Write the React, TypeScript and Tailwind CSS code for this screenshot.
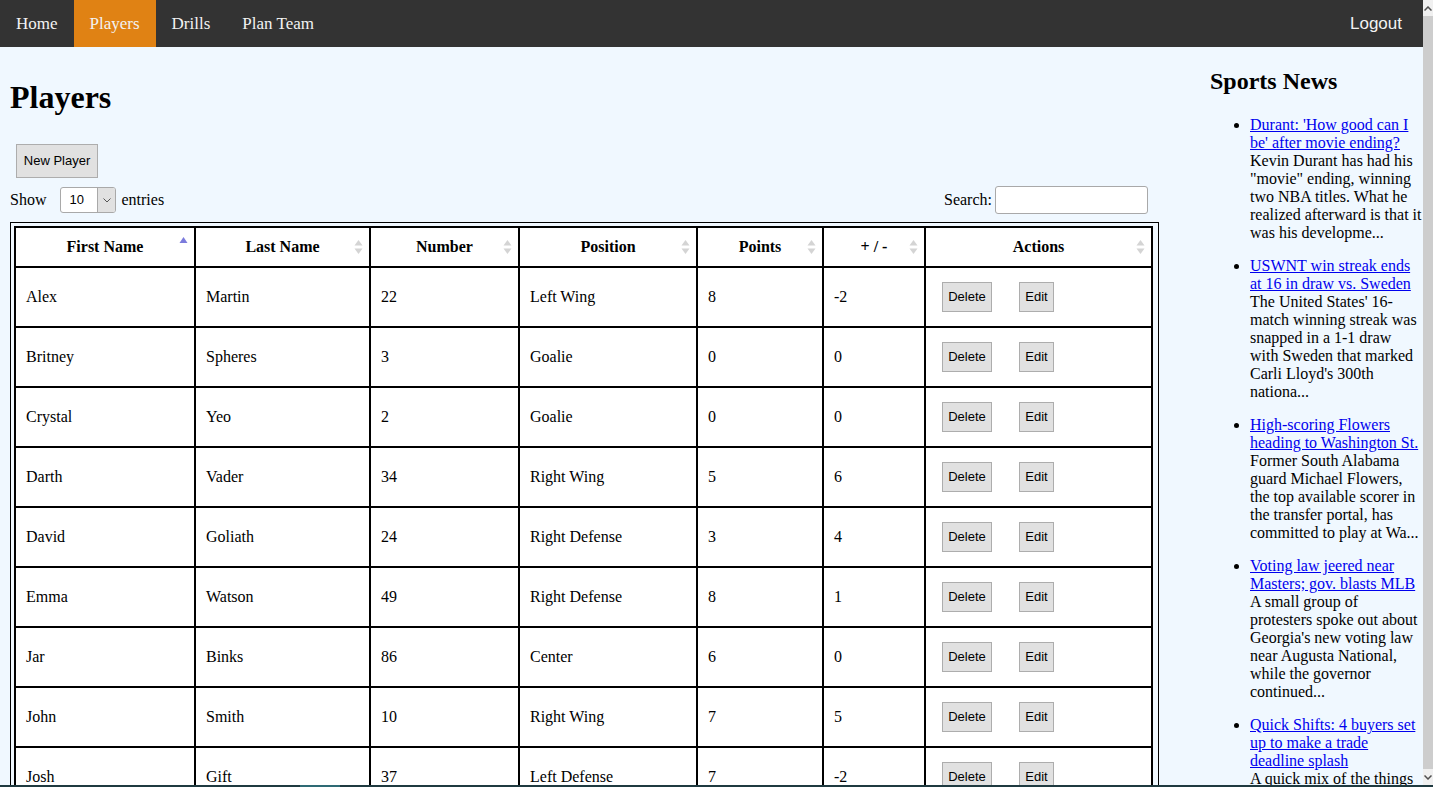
const players = [
  ["Alex", "Martin", "22", "Left Wing", "8", "-2"],
  ["Britney", "Spheres", "3", "Goalie", "0", "0"],
  ["Crystal", "Yeo", "2", "Goalie", "0", "0"],
  ["Darth", "Vader", "34", "Right Wing", "5", "6"],
  ["David", "Goliath", "24", "Right Defense", "3", "4"],
  ["Emma", "Watson", "49", "Right Defense", "8", "1"],
  ["Jar", "Binks", "86", "Center", "6", "0"],
  ["John", "Smith", "10", "Right Wing", "7", "5"],
  ["Josh", "Gift", "37", "Left Defense", "7", "-2"],
  ["Luke", "Skywalker", "11", "Center", "9", "3"],
];

const columns = [
  { label: "First Name", width: "w-[180px]" },
  { label: "Last Name", width: "w-[175px]" },
  { label: "Number", width: "w-[149px]" },
  { label: "Position", width: "w-[178px]" },
  { label: "Points", width: "w-[126px]" },
  { label: "+ / -", width: "w-[102px]" },
  { label: "Actions", width: "w-[227px]" },
];

const news = [
  {
    title: "Durant: 'How good can I be' after movie ending?",
    text: 'Kevin Durant has had his "movie" ending, winning two NBA titles. What he realized afterward is that it was his developme...',
  },
  {
    title: "USWNT win streak ends at 16 in draw vs. Sweden",
    text: "The United States' 16-match winning streak was snapped in a 1-1 draw with Sweden that marked Carli Lloyd's 300th nationa...",
  },
  {
    title: "High-scoring Flowers heading to Washington St.",
    text: "Former South Alabama guard Michael Flowers, the top available scorer in the transfer portal, has committed to play at Wa...",
  },
  {
    title: "Voting law jeered near Masters; gov. blasts MLB",
    text: "A small group of protesters spoke out about Georgia's new voting law near Augusta National, while the governor continued...",
  },
  {
    title: "Quick Shifts: 4 buyers set up to make a trade deadline splash",
    text: "A quick mix of the things we noticed around the league this week...",
  },
];

function SortIcon({ active }: { active: boolean }) {
  if (active) {
    return (
      <svg width="9" height="16" viewBox="0 0 9 16" className="absolute right-[6px] top-[8px]">
        <path d="M4.5 1 L8.5 7 L0.5 7 Z" fill="#7b7bdc" />
      </svg>
    );
  }
  return (
    <svg width="9" height="16" viewBox="0 0 9 16" className="absolute right-[6px] top-[11px]">
      <path d="M4.5 1 L8.5 6.5 L0.5 6.5 Z" fill="#d4d4d4" />
      <path d="M4.5 15 L8.5 9.5 L0.5 9.5 Z" fill="#d4d4d4" />
    </svg>
  );
}

function Btn({ children, className }: { children: string; className: string }) {
  return (
    <button
      className={`border border-[#adadad] bg-[#e1e1e1] text-[13px] text-black font-['Liberation_Sans',Arial,sans-serif] ${className}`}
    >
      {children}
    </button>
  );
}

export default function App() {
  return (
    <div className="flex h-[787px] flex-col overflow-hidden bg-[#f0f8ff] font-['Liberation_Serif','Times_New_Roman',serif] text-[16px] text-black">
      <div className="flex min-h-0 flex-1">
        <div className="flex min-w-0 flex-1 flex-col overflow-hidden">
          <nav className="flex h-[47px] shrink-0 items-stretch bg-[#333333] text-[17px] text-[#f2f2f2]">
            {["Home", "Players", "Drills", "Plan Team"].map((item) => (
              <a
                key={item}
                className={`flex items-center px-[16px] ${item === "Players" ? "bg-[#e08214]" : ""}`}
              >
                {item}
              </a>
            ))}
            <a className="ml-auto flex items-center pr-[21px] font-['Liberation_Sans',Arial,sans-serif]">
              Logout
            </a>
          </nav>

          <div className="flex min-h-0 flex-1">
            <main className="w-[1200px] shrink-0 px-[10px] pt-[10px]">
              <h1 className="mt-[22px] mb-[28px] text-[32px] font-bold leading-[37px]">Players</h1>
              <Btn className="ml-[6px] h-[34px] w-[82px]">New Player</Btn>

              <div className="mt-[8px] flex w-[1138px] items-center justify-between">
                <div className="flex items-center">
                  <span>Show</span>
                  <div className="ml-[14px] flex h-[26px] w-[56px] items-stretch overflow-hidden rounded-[3px] border border-[#a9a9a9] bg-white">
                    <span className="flex flex-1 items-center pl-[8px] text-[13px] font-['Liberation_Sans',Arial,sans-serif]">
                      10
                    </span>
                    <span className="flex w-[18px] items-center justify-center border-l border-[#a9a9a9] bg-[#e1e1e1]">
                      <svg width="8" height="5" viewBox="0 0 8 5">
                        <path d="M0.5 0.5 L4 4 L7.5 0.5" fill="none" stroke="#555" strokeWidth="1" />
                      </svg>
                    </span>
                  </div>
                  <span className="ml-[5px]">entries</span>
                </div>
                <div className="flex items-center">
                  <span className="mr-[3px]">Search:</span>
                  <input className="h-[28px] w-[153px] rounded-[3px] border border-[#a9a9a9] bg-white" />
                </div>
              </div>

              <div className="mt-[8px] w-[1149px] border border-black p-[3px]">
                <table className="w-[1139px] table-fixed border-collapse bg-white">
                  <thead>
                    <tr className="h-[40px]">
                      {columns.map((c, i) => (
                        <th key={c.label} className={`relative border-2 border-black font-bold ${c.width}`}>
                          {c.label}
                          <SortIcon active={i === 0} />
                        </th>
                      ))}
                    </tr>
                  </thead>
                  <tbody>
                    {players.map((p) => (
                      <tr key={p[0]} className="h-[60px]">
                        {p.map((v, i) => (
                          <td key={i} className="border-2 border-black pl-[10px]">
                            {v}
                          </td>
                        ))}
                        <td className="border-2 border-black pl-[16px]">
                          <div className="flex items-center">
                            <Btn className="h-[30px] w-[50px]">Delete</Btn>
                            <Btn className="ml-[27px] h-[30px] w-[35px]">Edit</Btn>
                          </div>
                        </td>
                      </tr>
                    ))}
                  </tbody>
                </table>
              </div>
            </main>

            <aside className="min-w-0 flex-1 pl-[10px]">
              <h2 className="mt-[20px] mb-[21px] text-[24px] font-bold leading-[28px]">Sports News</h2>
              <ul className="list-disc pl-[40px] leading-[18px]">
                {news.map((n) => (
                  <li key={n.title} className="mb-[15px]">
                    <a className="text-[#0000ee] underline">{n.title}</a>
                    <div>{n.text}</div>
                  </li>
                ))}
              </ul>
            </aside>
          </div>
        </div>

        <div className="flex w-[10px] shrink-0 flex-col bg-[#f0f0f0]">
          <div className="flex h-[16px] items-center justify-center">
            <svg width="8" height="5" viewBox="0 0 8 5">
              <path d="M0.5 4.5 L4 1 L7.5 4.5" fill="none" stroke="#505050" strokeWidth="1.5" />
            </svg>
          </div>
          <div className="flex-1 bg-[#cdcdcd]" />
          <div className="flex h-[16px] items-center justify-center">
            <svg width="8" height="5" viewBox="0 0 8 5">
              <path d="M0.5 0.5 L4 4 L7.5 0.5" fill="none" stroke="#505050" strokeWidth="1.5" />
            </svg>
          </div>
        </div>
      </div>
      <div className="flex h-[2px] shrink-0 bg-[#1f3a40]">
        <div className="ml-[300px] w-[40px] bg-[#2e6a74]" />
      </div>
    </div>
  );
}
